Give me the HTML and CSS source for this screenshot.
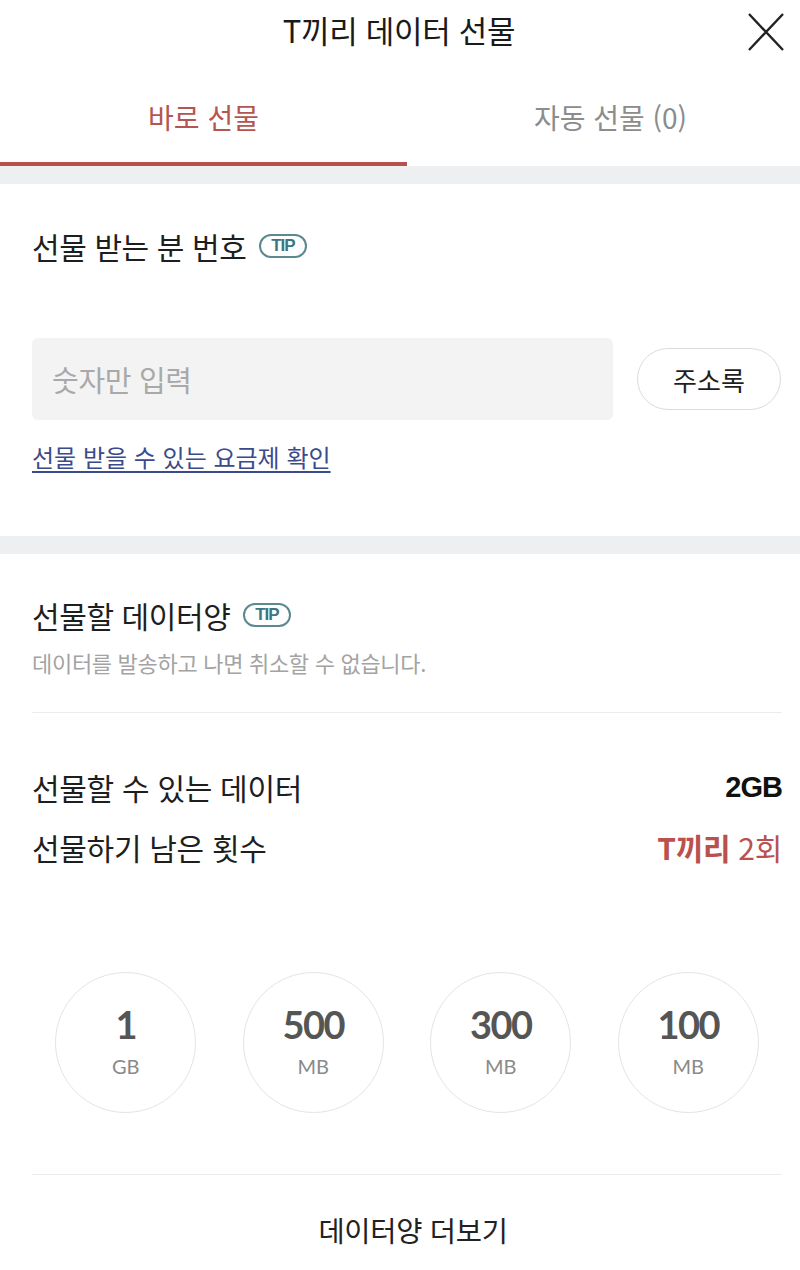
FILE: index.html
```html
<!DOCTYPE html>
<html lang="ko">
<head>
<meta charset="utf-8">
<title>T끼리 데이터 선물</title>
<link rel="stylesheet" href="styles.css">
</head>
<body>
<div class="page">
  <header class="header">
    <span class="spacer"></span>
    <h1 class="title">T끼리 데이터 선물</h1>
    <button class="close" aria-label="닫기">
      <svg width="36" height="38" viewBox="0 0 36 38"><path d="M1 1 L35 37 M35 1 L1 37" stroke="#222" stroke-width="2.4" fill="none"/></svg>
    </button>
  </header>

  <nav class="tabs">
    <div class="tab active">바로 선물</div>
    <div class="tab">자동 선물 (0)</div>
  </nav>
  <div class="band"></div>

  <section class="section first">
    <h2 class="heading">선물 받는 분 번호 <span class="tip">TIP</span></h2>
    <div class="input-row">
      <div class="input">숫자만 입력</div>
      <button class="contacts">주소록</button>
    </div>
    <a class="link" href="#">선물 받을 수 있는 요금제 확인</a>
  </section>
  <div class="band"></div>

  <section class="section second">
    <h2 class="heading">선물할 데이터양 <span class="tip">TIP</span></h2>
    <p class="note">데이터를 발송하고 나면 취소할 수 없습니다.</p>
    <hr class="divider top-divider">
    <div class="info-row first-row">
      <span>선물할 수 있는 데이터</span>
      <span class="amount">2GB</span>
    </div>
    <div class="info-row">
      <span>선물하기 남은 횟수</span>
      <span class="count"><b>T끼리</b> 2회</span>
    </div>
    <div class="chips">
      <div class="chip"><span class="num">1</span><span class="unit">GB</span></div>
      <div class="chip"><span class="num">500</span><span class="unit">MB</span></div>
      <div class="chip"><span class="num">300</span><span class="unit">MB</span></div>
      <div class="chip"><span class="num">100</span><span class="unit">MB</span></div>
    </div>
    <hr class="divider bottom-divider">
    <div class="more">데이터양 더보기</div>
  </section>
</div>
</body>
</html>
```
FILE: styles.css
```css
* { box-sizing: border-box; }
html, body { margin: 0; padding: 0; background: #fff; }
body {
  font-family: "Noto Sans CJK KR", "Noto Sans", sans-serif;
  color: #222;
}
.page { width: 800px; }

.header {
  height: 60px;
  display: grid;
  grid-template-columns: 1fr auto 1fr;
  align-items: center;
  padding: 0 16px 0 14px;
}
.title {
  margin: 0;
  font-size: 31px;
  line-height: 40px;
  font-weight: 400;
  letter-spacing: -0.3px;
  color: #1a1a1a;
}
.close {
  justify-self: end;
  background: none;
  border: 0;
  padding: 0;
  display: flex;
  margin-top: 4px;
}

.tabs {
  display: grid;
  grid-template-columns: 407px 1fr;
  height: 106px;
}
.tab {
  display: flex;
  align-items: center;
  justify-content: center;
  font-size: 28px;
  line-height: 40px;
  color: #8c8c8c;
  padding-top: 12px;
  border-bottom: 4px solid transparent;
}
.tab.active {
  color: #b5554f;
  border-bottom-color: #b6514d;
}
.tab:last-child { padding-left: 14px; }

.band { height: 18px; background: #eeeff1; }

.section { padding: 0 18px 0 32px; }
.section.first { padding-top: 44px; padding-bottom: 64px; }
.section.second { padding-top: 43px; padding-bottom: 30px; }

.heading {
  margin: 0;
  font-size: 30px;
  font-weight: 400;
  line-height: 36px;
  letter-spacing: -0.4px;
  display: flex;
  align-items: center;
  color: #1e1e1e;
}
.tip {
  display: inline-flex;
  align-items: center;
  justify-content: center;
  width: 48px;
  height: 24px;
  margin-left: 13px;
  border: 2px solid #5a8990;
  border-radius: 12px;
  color: #3a7781;
  font-family: "Liberation Sans", sans-serif;
  font-weight: 700;
  font-size: 17px;
  letter-spacing: -1px;
  padding-right: 1px;
}

.input-row {
  display: flex;
  align-items: center;
  justify-content: space-between;
  margin-top: 74px;
}
.input {
  width: 581px;
  height: 82px;
  background: #f3f3f3;
  border-radius: 6px;
  display: flex;
  align-items: center;
  padding-left: 20px;
  font-size: 29px;
  color: #a9a9a9;
  letter-spacing: -0.3px;
}
.contacts {
  width: 144px;
  height: 62px;
  border: 1px solid #dcdcdc;
  border-radius: 31px;
  background: #fff;
  font-family: inherit;
  font-size: 26px;
  color: #1e1e1e;
  margin-right: 1px;
}
.link {
  display: inline-block;
  margin-top: 22px;
  font-size: 24px;
  line-height: 30px;
  color: #3a4b8c;
  text-decoration: underline;
  text-underline-offset: 4px;
}

.note {
  margin: 15px 0 0;
  font-size: 22px;
  line-height: 28px;
  color: #a3a3a3;
  letter-spacing: -0.3px;
}
.divider {
  border: 0;
  height: 1px;
  background: #ececec;
  margin: 0;
}
.top-divider { margin-top: 36px; }

.info-row {
  display: flex;
  justify-content: space-between;
  align-items: center;
  font-size: 30px;
  line-height: 40px;
  letter-spacing: -0.3px;
  margin-top: 20px;
  color: #1e1e1e;
}
.info-row.first-row { margin-top: 54px; }
.amount {
  font-family: "Liberation Sans", sans-serif;
  font-weight: 700;
  font-size: 29px;
  letter-spacing: -1px;
  color: #111;
}
.count { color: #b9524e; }
.count b { font-weight: 700; }

.chips {
  display: flex;
  justify-content: space-around;
  margin-top: 105px;
}
.chip {
  width: 141px;
  height: 141px;
  border-radius: 50%;
  border: 1px solid #e4e4e4;
  display: flex;
  flex-direction: column;
  align-items: center;
  justify-content: center;
  font-family: Lato, sans-serif;
}
.num {
  font-size: 38px;
  font-weight: 700;
  color: #555;
  line-height: 40px;
  letter-spacing: -1.5px;
  margin-top: -4px;
}
.unit {
  font-size: 20px;
  color: #8a8a8a;
  line-height: 24px;
  margin-top: 10px;
}
.bottom-divider { margin-top: 61px; }
.more {
  margin-top: 35px;
  text-align: center;
  font-size: 28.5px;
  line-height: 40px;
  letter-spacing: -0.3px;
  color: #222;
  padding-left: 12px;
}
```
